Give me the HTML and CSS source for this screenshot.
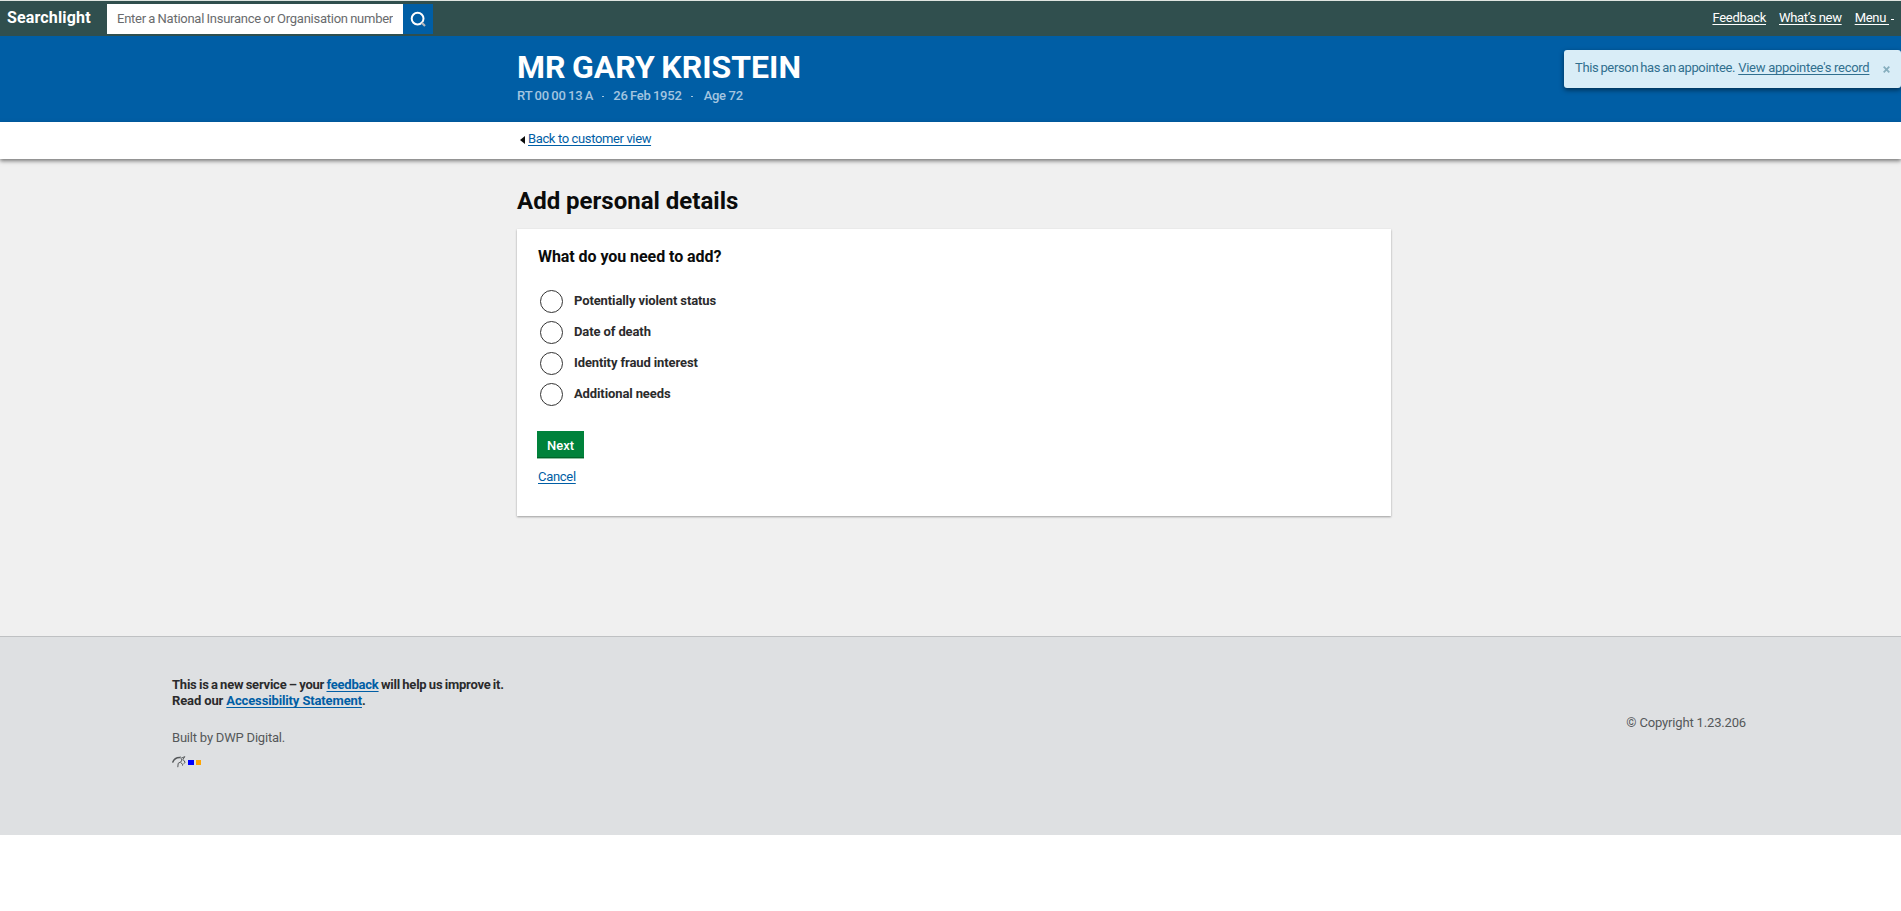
FILE: index.html
```html
<!DOCTYPE html>
<html lang="en">
<head>
<meta charset="utf-8">
<title>Searchlight - Add personal details</title>
<link rel="stylesheet" href="styles.css">
</head>
<body>
<header class="navbar">
  <a class="brand">Searchlight</a>
  <form class="search">
    <input class="search-input" type="text" placeholder="Enter a National Insurance or Organisation number">
    <button class="search-button" type="button" aria-label="Search">
      <svg width="30" height="30" viewBox="0 0 30 30"><circle cx="14.6" cy="14.6" r="5.9" fill="none" stroke="#fff" stroke-width="2"/><path d="M18.8 18.8l3.2 3.2" stroke="#b5b9bd" stroke-width="2.2"/></svg>
    </button>
  </form>
  <nav class="nav-links">
    <a class="nav-feedback">Feedback</a>
    <a class="nav-new">What’s new</a>
    <a class="nav-menu">Menu </a><span class="caret"></span>
  </nav>
</header>
<section class="banner">
  <h1 class="name"><span>MR GARY KRISTEIN</span></h1>
  <div class="facts"><span class="nino">RT 00 00 13 A</span><i></i><span class="dob">26 Feb 1952</span><i></i><span class="age">Age 72</span></div>
  <aside class="alert">
    <span class="alert-text">This person has an appointee.</span>
    <a class="alert-link">View appointee's record</a>
    <svg class="close" width="7" height="7" viewBox="0 0 7 7"><path d="M.7.7l5.6 5.6M6.3.7L.7 6.3" stroke="#86aebe" stroke-width="1.8"/></svg>
  </aside>
</section>
<div class="back"><span class="back-arrow"></span><a class="back-link">Back to customer view</a></div>
<main class="main">
  <h2 class="title"><span>Add personal details</span></h2>
  <section class="card">
    <h3 class="question"><span>What do you need to add?</span></h3>
    <div class="options">
      <div class="option"><span class="radio"></span><span class="label">Potentially violent status</span></div>
      <div class="option"><span class="radio"></span><span class="label">Date of death</span></div>
      <div class="option"><span class="radio"></span><span class="label">Identity fraud interest</span></div>
      <div class="option"><span class="radio"></span><span class="label">Additional needs</span></div>
    </div>
    <button class="next" type="button">Next</button>
    <div class="cancel-row"><a class="cancel">Cancel</a></div>
  </section>
</main>
<footer class="footer">
  <div class="about">
    <p class="service"><span class="s1">This is a new service – your <a>feedback</a> will help us improve it.</span><br><span class="s2">Read our <a>Accessibility Statement</a>.</span></p>
    <p class="built"><span>Built by DWP Digital.</span></p>
    <div class="marks">
      <svg width="14" height="12" viewBox="0 0 14 12" fill="none" stroke="#55585a"><path d="M.6 6.6C1.8 3.2 4.3 1.5 8 1.6" stroke-width="1.5"/><path d="M8 .7l1.6 1.4L12.8.6 11 3.4l2.2 3-1.6 1.2M8.6 2.5c1.8.7 1.4 2.2.2 3.4L6.2 7.3l-.4 3.9M8.8 6.4l2 2.4-.3.8" stroke-width="1"/></svg>
      <span class="mark blue"></span><span class="mark orange"></span>
    </div>
  </div>
  <p class="copyright">© Copyright 1.23.206</p>
</footer>
</body>
</html>
```
FILE: styles.css
```css
* { box-sizing: border-box; }
body { margin: 0; background: #fff; color: #2b2b2c; font: 13px/16px Roboto, "Liberation Sans", sans-serif; }
h1, h2, h3, p { margin: 0; }
a { text-decoration: underline; text-underline-offset: 2px; text-decoration-thickness: 1px; text-decoration-skip-ink: none; }
span, a { white-space: nowrap; }

.navbar { display: flex; align-items: flex-start; height: 36px; border-top: 1px solid #dfe5e1; background: #304f4e; color: #fff; padding-right: 7px; }
.brand { width: 107px; padding-left: 7px; font: 700 16px/34px Roboto, sans-serif; letter-spacing: .15px; text-decoration: none; }
.search { display: flex; margin-top: 3px; }
.search-input { width: 296px; height: 30px; border: 0; padding: 0 10px 2px; font: 13px Roboto, sans-serif; letter-spacing: -.26px; word-spacing: -.5px; background: #fff; }
.search-input::placeholder { color: #696b6d; opacity: 1; }
.search-button { width: 30px; height: 30px; padding: 0; border: 0; background: #005ea5; }
.nav-links { display: flex; margin-left: auto; line-height: 34px; letter-spacing: -.3px; }
.nav-new, .nav-menu { margin-left: 13px; }
.nav-menu { white-space: pre; }
.caret { width: 3px; height: 1px; margin: 18px 0 0 2px; background: #fff; }

.banner { position: relative; height: 86px; padding: 13px 0 0 517px; background: #005ea5; color: #fff; }
.name { font-size: 32px; line-height: 36px; word-spacing: -1.5px; }
.facts { display: flex; height: 22px; align-items: center; font-weight: 500; color: #a3c5e0; }
.facts i { width: 2px; height: 1px; margin: 0 9px; background: #a3c5e0; }
.facts i:nth-of-type(2) { margin-right: 11px; }
.nino { letter-spacing: -.1px; word-spacing: -.9px; }
.dob { letter-spacing: -.2px; word-spacing: -.8px; }
.age { letter-spacing: -.3px; }
.alert { position: absolute; right: 0; top: 14px; display: flex; align-items: center; width: 337px; height: 38px; padding: 0 11px 2px; border-radius: 3px; background: #d9edf7; color: #31708f; box-shadow: 0 2px 5px rgba(0,0,0,.5); }
.alert-text { letter-spacing: -.34px; word-spacing: -.9px; }
.alert-link { margin: -1px 0 0 3px; letter-spacing: -.27px; }
.close { margin: 2px 0 0 auto; }

.back { position: relative; display: flex; height: 37px; padding: 9px 0 0 520px; background: #fff; box-shadow: 0 2px 4px rgba(0,0,0,.5); }
.back-arrow { width: 0; margin: 5px 3px 0 0; height: 0; border: solid transparent; border-width: 4px 5px 4px 0; border-right-color: #0b0c0c; }
.back-link { letter-spacing: -.37px; }
.back-link, .cancel, .service a { color: #005ea5; }

.main { height: 477px; padding: 27px 510px 0 517px; background: #f0f0f0; }
.title { height: 43px; color: #0b0c0c; font-size: 24px; line-height: 30px; }
.card { height: 287px; padding: 19px 20px 0; background: #fff; box-shadow: 0 1px 2px rgba(0,0,0,.35); }
.question { height: 37px; padding-left: 1px; color: #0b0c0c; font-size: 16px; line-height: 18px; letter-spacing: -.06px; }
.options { height: 146px; padding: 5px 3px 0; }
.option { display: flex; height: 31px; align-items: flex-start; }
.radio { width: 23px; height: 23px; border: 1px solid #333; border-radius: 50%; background: #fff; }
.label { padding: 3px 0 0 11px; font-weight: 700; letter-spacing: -.11px; }
.next { display: block; width: 47px; height: 28px; padding: 0; border: 0; box-shadow: inset 0 -1px #8bc09f, inset 0 -2px #006429; background: #00823b; color: #fff; font: 500 13px/27px Roboto, sans-serif; }
.cancel-row { padding: 10px 0 0 1px; letter-spacing: -.3px; }

.footer { display: flex; justify-content: space-between; height: 199px; padding: 40px 155px 0 172px; border-top: 1px solid #bfc1c3; background: #dee0e2; }
.service { font-weight: 700; }
.s1 { letter-spacing: -.22px; word-spacing: -.65px; }
.s2 { letter-spacing: -.13px; }
.built { margin-top: 21px; color: #55585a; letter-spacing: -.2px; }
.marks { display: flex; gap: 2px; align-items: center; margin-top: 10px; }
.mark { width: 6px; height: 5px; }
.blue { background: #00f; }
.orange { width: 5px; background: #ffa500; }
.copyright { padding-top: 38px; color: #55585a; letter-spacing: -.16px; }
```
